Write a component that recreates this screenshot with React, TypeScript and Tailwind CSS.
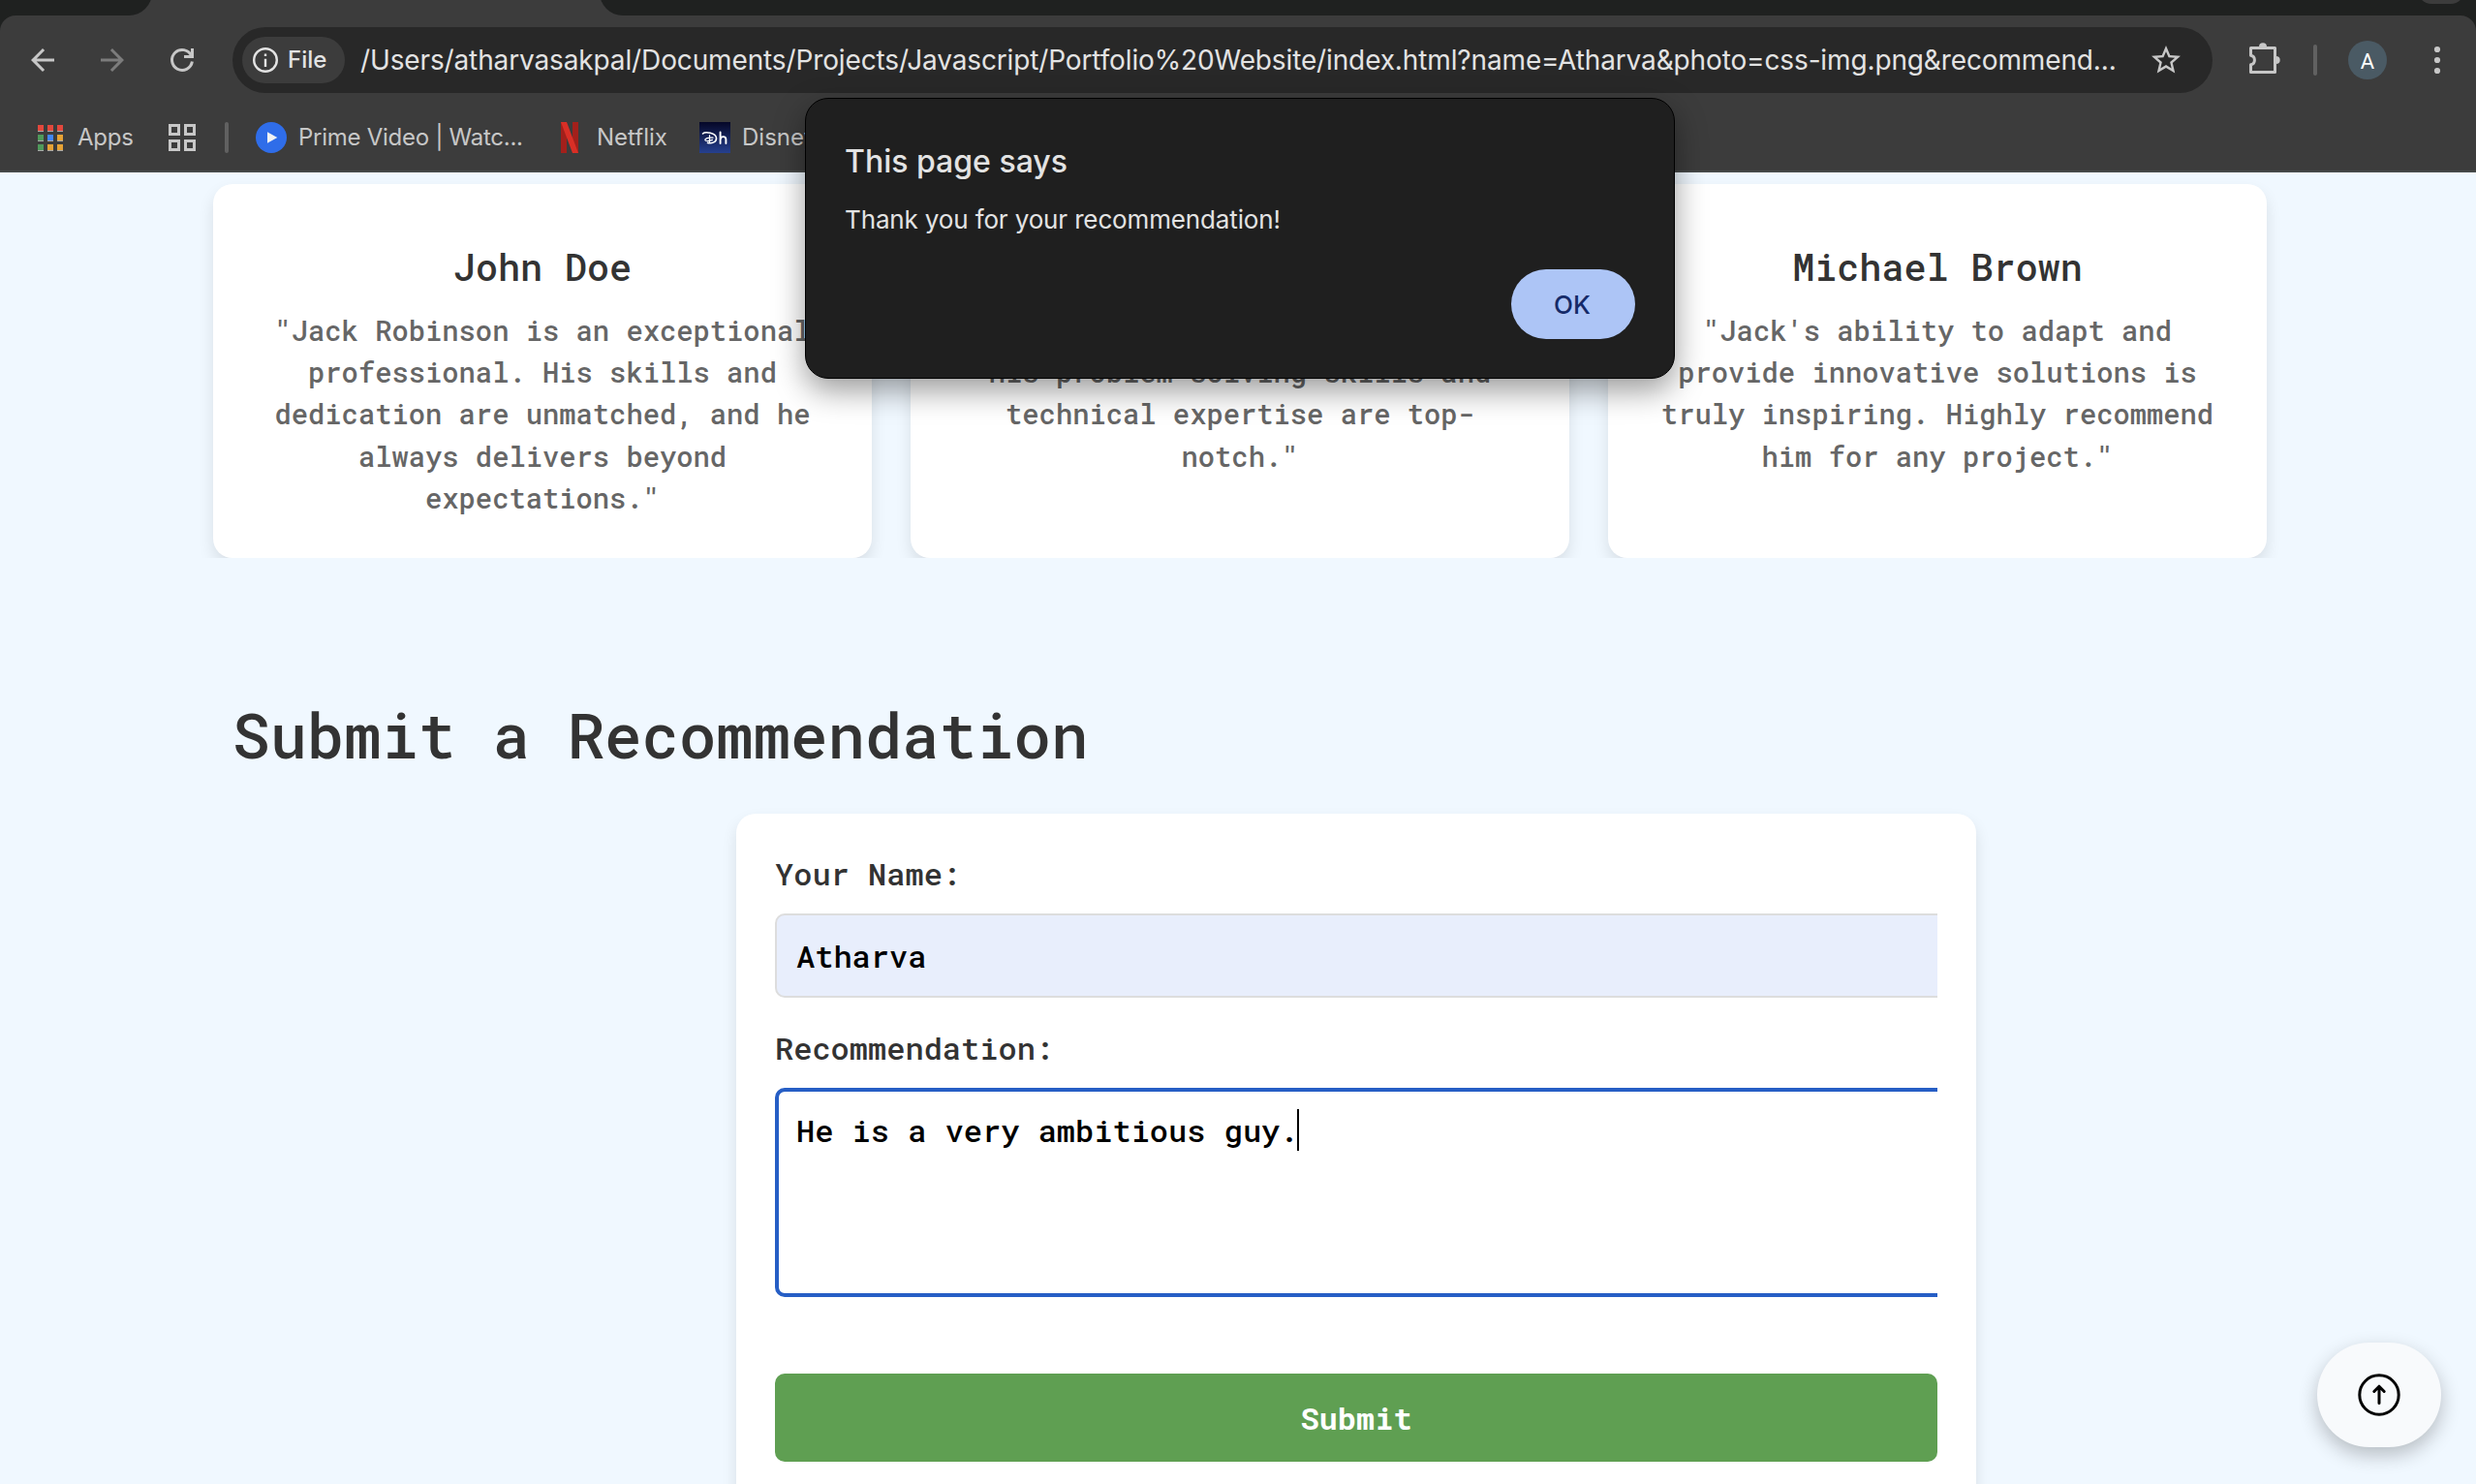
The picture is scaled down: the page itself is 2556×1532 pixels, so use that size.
import type { ReactNode } from 'react';

const URL_TEXT =
  '/Users/atharvasakpal/Documents/Projects/Javascript/Portfolio%20Website/index.html?name=Atharva&photo=css-img.png&recommend...';

function TabStrip() {
  return (
    <div className="flex h-4 items-end overflow-hidden bg-[#3c3c3c]">
      <div className="h-10 w-[157px] shrink-0 rounded-br-[24px] bg-[#1f2120]" />
      <div className="w-[462px] shrink-0" />
      <div className="flex h-10 flex-1 items-end justify-end rounded-bl-[24px] bg-[#1f2120] pr-3">
        <div className="mb-3 h-7 w-[48px] rounded-[14px] bg-[#3c3c3c]" />
      </div>
    </div>
  );
}

function ArrowBack({ className }: { className: string }) {
  return (
    <svg viewBox="0 0 24 24" className={className} fill="currentColor">
      <path d="M20 11H7.83l5.59-5.59L12 4l-8 8 8 8 1.41-1.41L7.83 13H20v-2z" />
    </svg>
  );
}

function Reload() {
  return (
    <svg viewBox="0 0 36 36" className="ml-9 size-9 text-[#c7c7c7]" fill="none" stroke="currentColor" strokeWidth="3">
      <path d="M27.6 13.6A10.5 10.5 0 1 0 28.4 19.6" />
      <path d="M28.5 6V14.5H20" />
    </svg>
  );
}

function Toolbar() {
  return (
    <div className="-mt-4 bg-[#1f2120] pt-0">
      <TabStrip />
      <div className="flex h-[92px] items-center rounded-t-[16px] bg-[#3c3c3c] pl-[26px]">
        <ArrowBack className="size-9 text-[#c7c7c7]" />
        <ArrowBack className="ml-9 size-9 rotate-180 text-[#7c7c7c]" />
        <Reload />
        <div className="ml-[34px] flex h-[68px] w-[2044px] items-center rounded-full bg-[#282828] pl-[10px]">
          <div className="flex h-12 w-[106px] items-center rounded-full bg-[#3c3c3c] pl-[11px] text-[#e3e3e3]">
            <svg viewBox="0 0 26 26" className="size-[26px]" fill="none" stroke="currentColor" strokeWidth="2.4">
              <circle cx="13" cy="13" r="11.8" />
              <path d="M13 11.8V20M13 6.4V9" />
            </svg>
            <span className="ml-[10px] text-2xl font-medium leading-8">File</span>
          </div>
          <span className="ml-4 w-[1846px] shrink-0 whitespace-nowrap text-[28px] leading-[34px] tracking-[-0.13px] text-[#e3e3e3]">
            {URL_TEXT}
          </span>
          <svg viewBox="0 0 24 24" className="size-9 text-[#c7c7c7]" fill="currentColor">
            <path d="M22 9.24l-7.19-.62L12 2 9.19 8.63 2 9.24l5.46 4.73L5.82 21 12 17.27 18.18 21l-1.63-7.03L22 9.24zM12 15.4l-3.76 2.27 1-4.28-3.32-2.88 4.38-.38L12 6.1l1.71 4.04 4.38.38-3.32 2.88 1 4.28L12 15.4z" />
          </svg>
        </div>
        <svg viewBox="0 0 32 32" className="mb-1 ml-[38px] size-8 text-[#c7c7c7]" fill="none" stroke="currentColor" strokeWidth="3" strokeLinejoin="round">
          <path d="M1.5 5.5H26.5V30.5H1.5V22.8A4.9 4.9 0 0 0 1.5 13.2Z" />
          <path d="M10 4.5a4 4.2 0 0 1 8 0ZM27.5 14a4.2 4 0 0 1 0 8Z" fill="currentColor" stroke="none" />
        </svg>
        <div className="ml-[34px] h-8 w-1 rounded-full bg-[#616161]" />
        <div className="ml-8 flex h-10 w-10 items-center justify-center rounded-full bg-[#4a5a64] pt-0.5 font-[Roboto] text-[22px] text-white">
          A
        </div>
        <svg viewBox="0 0 8 30" className="ml-[48px] h-[30px] w-2 text-[#c7c7c7]" fill="currentColor">
          <circle cx="4" cy="4" r="3.1" />
          <circle cx="4" cy="15" r="3.1" />
          <circle cx="4" cy="26" r="3.1" />
        </svg>
      </div>
    </div>
  );
}

const appColors = ['#e2483d', '#e2483d', '#e2483d', '#4f9a5b', '#4286f5', '#e6a235', '#4f9a5b', '#e6a235', '#e6a235'];

function BookmarksBar() {
  return (
    <div className="flex h-[68px] items-center pl-[39px] text-2xl leading-8 text-[#c7c7c7]">
      <div className="grid grid-cols-[repeat(3,6px)] gap-x-1 gap-y-[3px]">
        {appColors.map((color, i) => (
          <div key={i} className="h-[7px] border-b border-[#a9a9a9]" style={{ backgroundColor: color }} />
        ))}
      </div>
      <span className="ml-[15px] w-[94px] tracking-[-0.2px]">Apps</span>
      <svg viewBox="0 0 28 28" className="size-7" fill="none" stroke="currentColor" strokeWidth="3">
        <path d="M1.5 1.5h9v9h-9zM17.5 1.5h9v9h-9zM1.5 17.5h9v9h-9zM17.5 17.5h9v9h-9z" />
      </svg>
      <div className="ml-[30px] h-8 w-1 rounded-full bg-[#616161]" />
      <svg viewBox="0 0 32 32" className="ml-7 size-8">
        <circle cx="16" cy="16" r="16" fill="#2f6de9" />
        <path d="M12 10.2L22.3 16L12 21.8Z" fill="#f3f3f3" />
      </svg>
      <span className="ml-3 w-[271px] whitespace-nowrap tracking-[-0.26px]">Prime Video | Watc...</span>
      <svg viewBox="0 0 18 32" className="h-8 w-[18px]">
        <path d="M0 0H6V32H0zM12 0H18V32H12z" fill="#a3201b" />
        <path d="M0 0H6L18 32H12z" fill="#d92f26" />
      </svg>
      <span className="ml-[19px] w-[106px]">Netflix</span>
      <svg viewBox="0 0 32 32" className="size-8">
        <defs>
          <linearGradient id="disney" x1="0" y1="0" x2="0" y2="1">
            <stop offset="0" stopColor="#050727" />
            <stop offset="1" stopColor="#26408f" />
          </linearGradient>
        </defs>
        <rect width="32" height="32" fill="url(#disney)" />
        <g fill="none" stroke="#fff" strokeLinecap="round">
          <path d="M3.5 12C6 9.6 17 11 17.5 16.5C17.8 20.6 13 22.5 8.5 21.4" strokeWidth="1.6" />
          <path d="M10.5 13.5V21M14 16.2C9 15.6 5.5 17.2 5.8 18.6C6.2 20 10 19.6 13.5 18.4" strokeWidth="1.2" />
          <path d="M21.6 10.5V22M21.6 18.2C22 14.4 27.4 14 27.4 18V22" strokeWidth="1.9" />
        </g>
      </svg>
      <span className="ml-3">Disney+</span>
    </div>
  );
}

function Card({ name, children }: { name?: string; children: ReactNode }) {
  return (
    <article className="h-[386px] w-[680px] shrink-0 rounded-[20px] bg-white px-10 pt-[57px] text-center shadow-[0_8px_16px_rgba(0,0,0,0.1)]">
      <h3 className="h-[58px] text-[38.4px] leading-[57.6px] text-[#333]">{name}</h3>
      <p className="mt-[15px] text-[28.8px] leading-[43.2px] text-[#666]">{children}</p>
    </article>
  );
}

function Recommendations() {
  return (
    <section className="flex h-[398px] gap-10 overflow-hidden pl-[220px] pt-3">
      <Card name="John Doe">
        "Jack Robinson is an exceptional professional. His skills and dedication are unmatched, and he always delivers
        beyond expectations."
      </Card>
      <Card>
        <br />
        His problem-solving skills and technical expertise are top-notch."
      </Card>
      <Card name="Michael Brown">
        "Jack's ability to adapt and provide innovative solutions is truly inspiring. Highly recommend him for any
        project."
      </Card>
    </section>
  );
}

function RecommendationForm() {
  return (
    <form className="ml-[760px] mt-[34px] h-[760px] w-[1280px] rounded-[20px] bg-white p-10 text-[32px] leading-[42px] text-[#333] shadow-[0_8px_16px_rgba(0,0,0,0.1)]">
      <div className="overflow-hidden">
        <div className="pt-px">Your Name:</div>
        <div className="mt-5 h-[87px] w-[1244px] rounded-[10px] border-2 border-[#ddd] bg-[#e8eefc] px-5 pt-[20.5px] text-black">
          Atharva
        </div>
        <div className="mt-[31px]">Recommendation:</div>
        <div className="mt-5 flex h-[216px] w-[1244px] rounded-[10px] border-4 border-[#265ec5] px-[18px] pt-[18px] text-black">
          <span className="pt-px">He is a very ambitious guy.</span>
          <span className="-ml-px h-[43px] w-0.5 bg-black" />
        </div>
      </div>
      <div className="mt-[79px] flex h-[91px] items-center justify-center rounded-[10px] bg-[#5f9f52] font-bold text-white">
        Submit
      </div>
    </form>
  );
}

function AlertDialog() {
  return (
    <div
      role="alertdialog"
      className="absolute left-[831px] top-[101px] h-[290px] w-[898px] rounded-[24px] border border-black bg-[#1f1f1f] px-[40px] pt-[45px] font-[Inter] text-[#e3e3e3] shadow-[0_12px_32px_rgba(0,0,0,0.4)]"
    >
      <h2 className="text-[32px] font-medium leading-10">This page says</h2>
      <p className="mt-6 text-[26px] leading-8 tracking-[-0.14px]">Thank you for your recommendation!</p>
      <div className="mt-[35px] flex justify-end">
        <button className="h-[72px] w-32 rounded-full bg-[#adc5f6] pr-0.5 text-[26px] font-medium text-[#152a68]">OK</button>
      </div>
    </div>
  );
}

export default function App() {
  return (
    <div className="relative h-[1532px] w-[2556px] overflow-hidden bg-[#f0f8ff]">
      <header className="h-[178px] border-b-2 border-[#464949] bg-[#3c3c3c] pt-4 font-[Inter]">
        <Toolbar />
        <BookmarksBar />
      </header>
      <main className="font-['Roboto_Mono','Noto_Sans_Mono','DejaVu_Sans_Mono',monospace] font-[550]">
        <Recommendations />
        <h1 className="ml-[240px] mt-[134px] text-[64px] leading-[96px] text-[#333]">Submit a Recommendation</h1>
        <RecommendationForm />
      </main>
      <AlertDialog />
      <button className="absolute left-[2392px] top-[1386px] flex h-[108px] w-32 items-center justify-center rounded-full bg-[#f8fafc] shadow-[0_8px_20px_rgba(0,0,0,0.24)]">
        <svg viewBox="0 0 44 44" className="size-11" fill="none" stroke="#000" strokeWidth="3" strokeLinecap="round" strokeLinejoin="round">
          <circle cx="22" cy="22" r="20.2" />
          <path d="M22 30.5V13.5M16.8 18.5L22 13.2L27.2 18.5" />
        </svg>
      </button>
    </div>
  );
}
